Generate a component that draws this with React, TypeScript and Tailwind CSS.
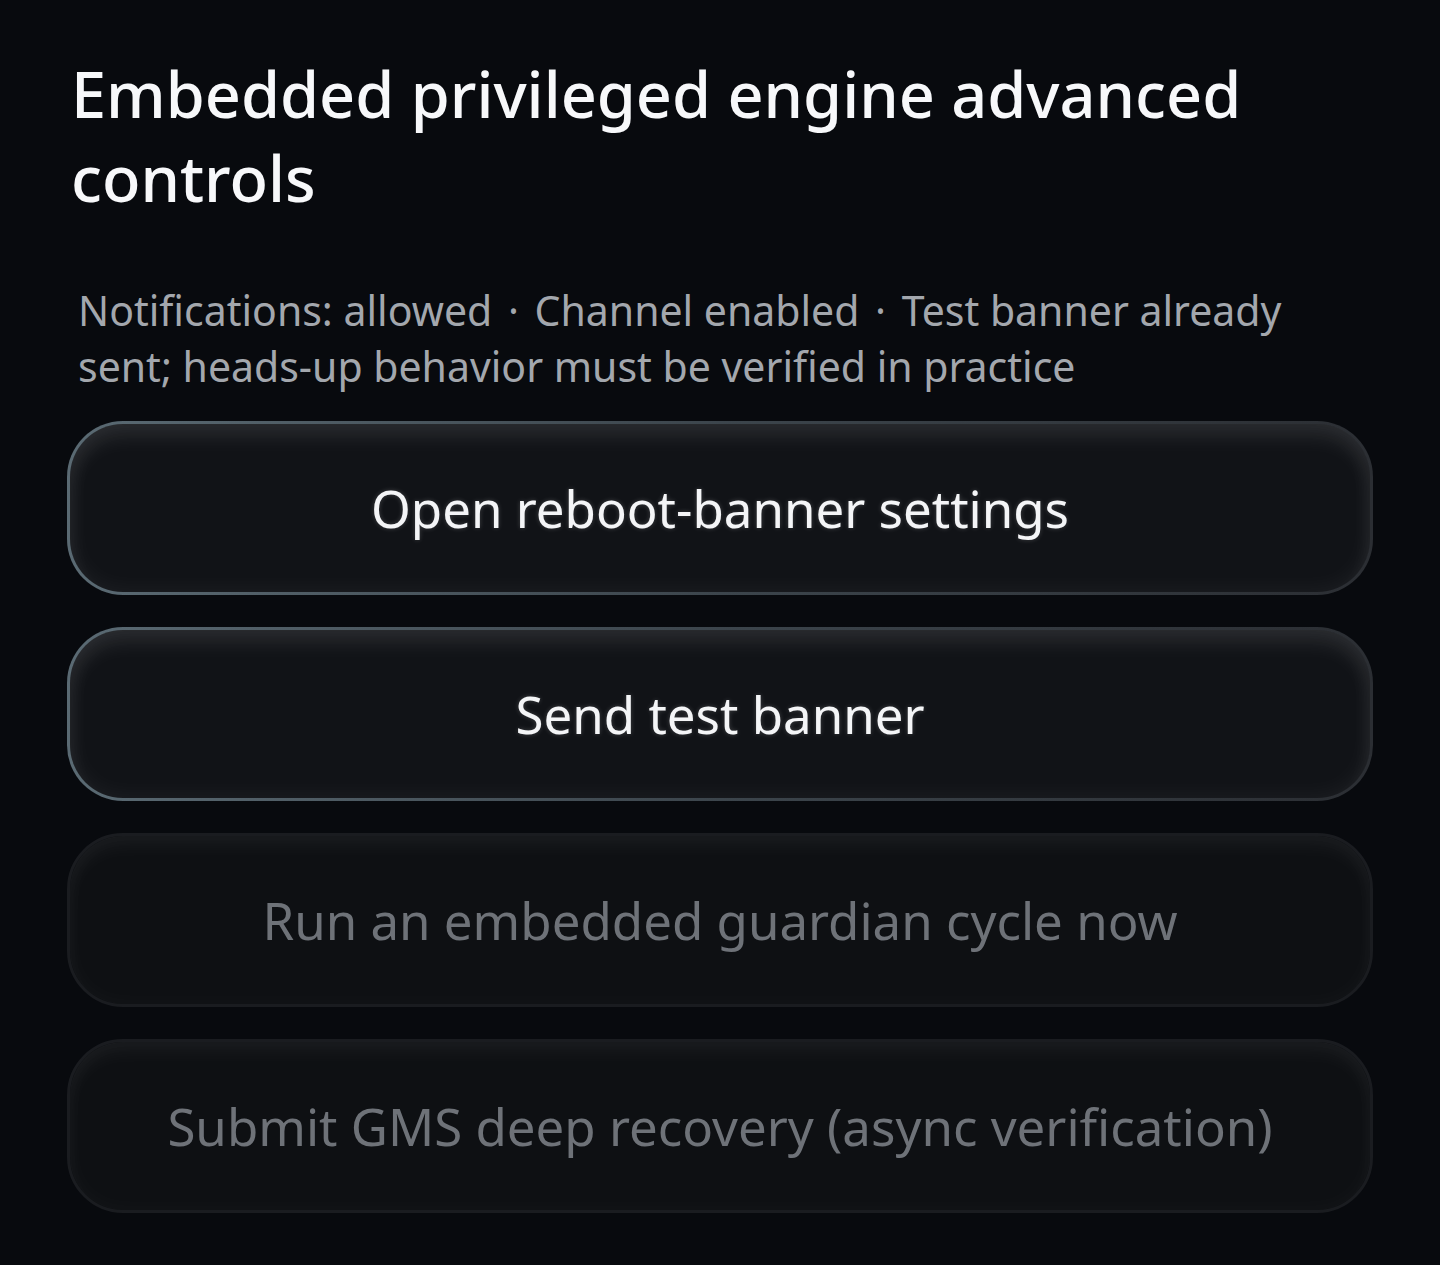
const ACTIONS = [
  { label: "Open reboot-banner settings", enabled: true },
  { label: "Send test banner", enabled: true },
  { label: "Run an embedded guardian cycle now", enabled: false },
  { label: "Submit GMS deep recovery (async verification)", enabled: false },
];

function ActionButton({ label, enabled }: { label: string; enabled: boolean }) {
  return (
    <button
      type="button"
      disabled={!enabled}
      className={
        enabled
          ? "h-[174px] w-full rounded-[56px] border-[3px] border-transparent text-[51px] text-[#f4f5f7] [text-shadow:0_0_5px_rgba(255,255,255,0.2)] [background:linear-gradient(#111317,#111317)_padding-box,linear-gradient(90deg,#5a6a73,#3c454c_50%,#2b2e33)_border-box] shadow-[inset_0_14px_20px_rgba(255,255,255,0.08),inset_0_0_26px_rgba(255,255,255,0.06)]"
          : "h-[174px] w-full rounded-[56px] border-[3px] border-[#1a1c20] bg-[#0e1013] text-[51px] text-[#6e7278] shadow-[inset_0_12px_18px_rgba(255,255,255,0.04),inset_0_0_24px_rgba(255,255,255,0.03)]"
      }
    >
      {label}
    </button>
  );
}

function Dot() {
  return <span className="mx-[5px]">·</span>;
}

export default function App() {
  return (
    <div className="min-h-[1265px] bg-[#080a0e] px-[67px] pt-[52px] font-['Noto_Sans',sans-serif]">
      <h1 className="pl-1 text-[63px] font-medium leading-[84px] text-[#f7f8fa]">
        Embedded privileged engine advanced controls
      </h1>
      <p className="mt-[62px] pl-[11px] pr-[80px] text-[41px] leading-[56px] text-[#a3a7ad]">
        Notifications: allowed <Dot /> Channel enabled <Dot /> Test banner
        already sent; heads-up behavior must be verified in practice
      </p>
      <div className="mt-[27px] flex flex-col gap-[32px]">
        {ACTIONS.map((a) => (
          <ActionButton key={a.label} label={a.label} enabled={a.enabled} />
        ))}
      </div>
    </div>
  );
}
